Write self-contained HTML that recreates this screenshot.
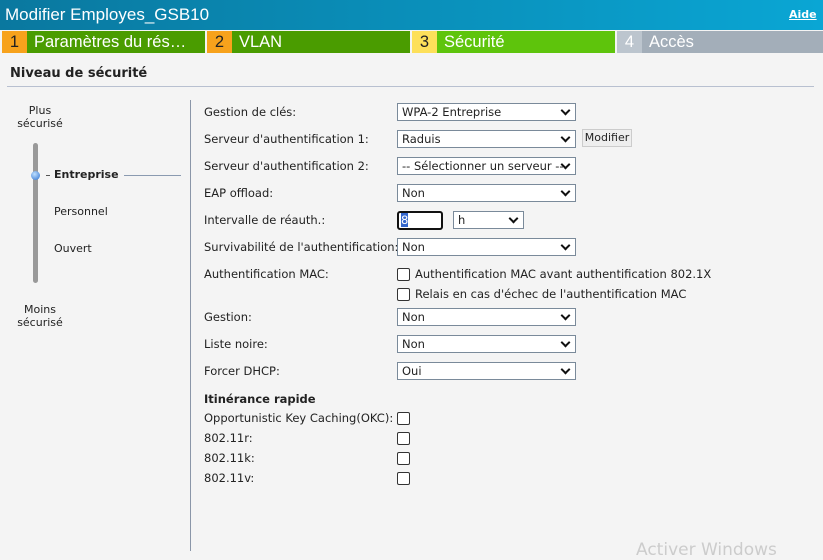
<!DOCTYPE html><html><head><style>
body{margin:0;width:823px;height:551px;background:#f4f4f4;font-family:Tahoma,"DejaVu Sans",sans-serif;font-size:11.5px;color:#222;position:relative;overflow:hidden}
.a{position:absolute}
.hdr{left:0;top:0;width:823px;height:30px;background:linear-gradient(90deg,#0a789f,#0aa6d4)}
.t{top:31px;height:22px;color:#fff;font-family:"Liberation Sans",sans-serif;font-size:16.5px;line-height:22px}
.n{top:31px;height:22px;width:25px;text-align:center;font-family:"Liberation Sans",sans-serif;font-size:16.5px;line-height:22px;color:#222}
.sel{left:397px;width:173px;height:16px;border:1px solid #7a8a9a;background:#fff;font-size:11.5px;line-height:16px;padding-left:4px;box-sizing:content-box;white-space:nowrap;overflow:hidden}
.sel:after{content:"";position:absolute;right:6px;top:3px;width:5px;height:5px;border-right:2px solid #111;border-bottom:2px solid #111;transform:rotate(45deg);background:#fff}
.lbl{left:204px}
.cb{left:397px;width:11px;height:11px;border:1px solid #333;border-radius:2px;background:#fff}
</style></head><body>
<div class="a hdr"></div>
<div class="a" style="left:5px;top:5px;color:#fff;font-family:'Liberation Sans',sans-serif;font-size:17px">Modifier Employes_GSB10</div>
<div class="a" style="left:789px;top:8px;color:#fff;font-size:11px;font-weight:bold;text-decoration:underline">Aide</div>
<div class="a n" style="left:2px;background:#f7a21c">1</div><div class="a t" style="left:27px;width:178px;background:#4a9c00;padding-left:7px;box-sizing:border-box">Paramètres du rés…</div>
<div class="a n" style="left:207px;background:#f7a21c">2</div><div class="a t" style="left:232px;width:178px;background:#4a9c00;padding-left:7px;box-sizing:border-box">VLAN</div>
<div class="a n" style="left:412px;background:#fde05a">3</div><div class="a t" style="left:437px;width:178px;background:#5ec40c;padding-left:7px;box-sizing:border-box">Sécurité</div>
<div class="a n" style="left:617px;background:#bcc5ce;color:#fff">4</div><div class="a t" style="left:642px;width:181px;background:#a3aeb9;padding-left:7px;box-sizing:border-box">Accès</div>
<div class="a" style="left:10px;top:66px;font-weight:bold;font-size:13px">Niveau de sécurité</div>
<div class="a" style="left:7px;top:86px;width:807px;height:1px;background:#b8c0d0"></div>
<div class="a" style="left:190px;top:100px;width:1px;height:451px;background:#8a96a8"></div>
<div class="a" style="left:17px;top:104px;text-align:center;font-size:11px;line-height:13px;width:46px">Plus<br>sécurisé</div>
<div class="a" style="left:33px;top:143px;width:5px;height:140px;background:#999;border-radius:3px"></div>
<div class="a" style="left:31px;top:171px;width:9px;height:9px;border-radius:50%;background:radial-gradient(circle at 40% 35%,#bfe0ff,#2a6fd0)"></div>
<div class="a" style="left:46px;top:175px;width:4px;height:1px;background:#555"></div>
<div class="a" style="left:54px;top:168px;font-weight:bold;font-size:11px">Entreprise</div>
<div class="a" style="left:124px;top:175px;width:57px;height:1px;background:#8a9ab0"></div>
<div class="a" style="left:54px;top:205px;font-size:11px">Personnel</div>
<div class="a" style="left:54px;top:242px;font-size:11px">Ouvert</div>
<div class="a" style="left:17px;top:303px;text-align:center;font-size:11px;line-height:13px;width:46px">Moins<br>sécurisé</div>

<div class="a lbl" style="top:105px">Gestion de clés:</div><div class="a sel" style="top:103px">WPA-2 Entreprise</div>
<div class="a lbl" style="top:132px">Serveur d'authentification 1:</div><div class="a sel" style="top:130px">Raduis</div>
<div class="a" style="left:582px;top:129px;width:48px;height:16px;border:1px solid #ccc;background:#eee;font-size:11px;line-height:16px;text-align:center">Modifier</div>
<div class="a lbl" style="top:159px">Serveur d'authentification 2:</div><div class="a sel" style="top:157px">-- Sélectionner un serveur --</div>
<div class="a lbl" style="top:186px">EAP offload:</div><div class="a sel" style="top:184px">Non</div>
<div class="a lbl" style="top:213px">Intervalle de réauth.:</div>
<div class="a" style="left:397px;top:211px;width:40px;height:15px;border:2px solid #111;border-radius:3px;background:#fff;line-height:15px;padding-left:2px"><span style="background:#3366cc;color:#fff">8</span></div>
<div class="a sel" style="left:453px;top:211px;width:65px">h</div>
<div class="a lbl" style="top:240px">Survivabilité de l'authentification:</div><div class="a sel" style="top:238px">Non</div>
<div class="a lbl" style="top:267px">Authentification MAC:</div>
<div class="a cb" style="top:268px"></div><div class="a" style="left:415px;top:267px">Authentification MAC avant authentification 802.1X</div>
<div class="a cb" style="top:288px"></div><div class="a" style="left:415px;top:287px">Relais en cas d'échec de l'authentification MAC</div>
<div class="a lbl" style="top:310px">Gestion:</div><div class="a sel" style="top:308px">Non</div>
<div class="a lbl" style="top:337px">Liste noire:</div><div class="a sel" style="top:335px">Non</div>
<div class="a lbl" style="top:364px">Forcer DHCP:</div><div class="a sel" style="top:362px">Oui</div>
<div class="a lbl" style="top:392px;font-weight:bold">Itinérance rapide</div>
<div class="a lbl" style="top:411px">Opportunistic Key Caching(OKC):</div><div class="a cb" style="top:412px"></div>
<div class="a lbl" style="top:431px">802.11r:</div><div class="a cb" style="top:432px"></div>
<div class="a lbl" style="top:451px">802.11k:</div><div class="a cb" style="top:452px"></div>
<div class="a lbl" style="top:471px">802.11v:</div><div class="a cb" style="top:472px"></div>
<div class="a" style="left:636px;top:540px;color:#ccc;font-size:17px">Activer Windows</div>
</body></html>
